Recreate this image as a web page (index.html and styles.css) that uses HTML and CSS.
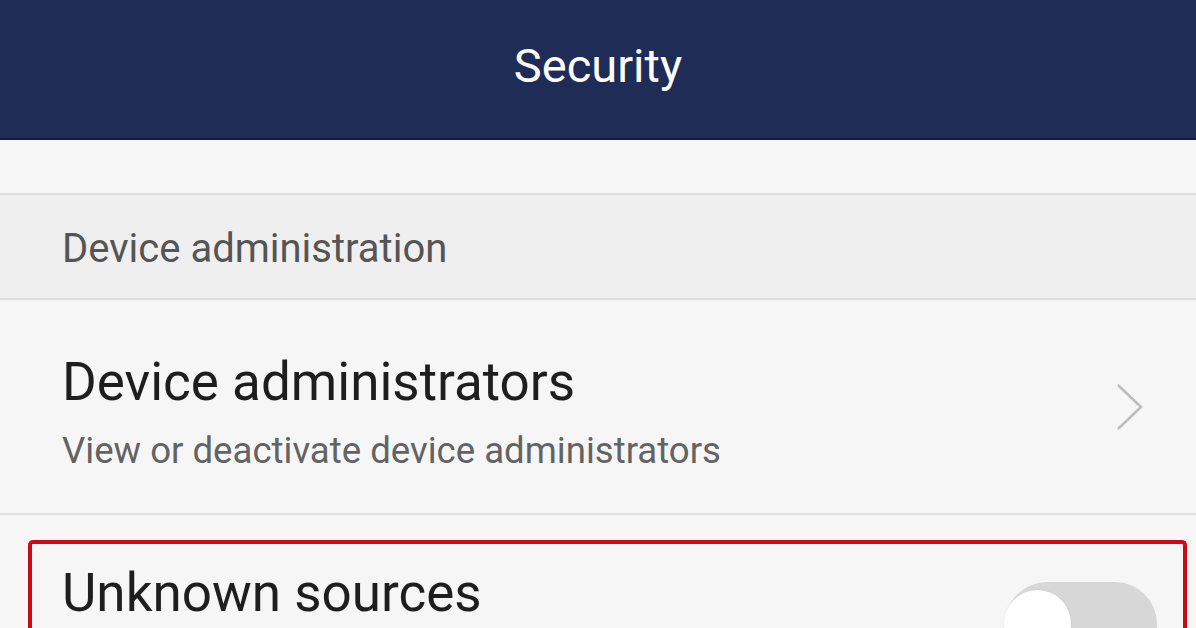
FILE: index.html
```html
<!DOCTYPE html>
<html>
<head>
<meta charset="utf-8">
<link rel="stylesheet" href="styles.css">
</head>
<body>
<div class="screen">
  <header class="topbar"><h1 class="title">Security</h1></header>
  <div class="spacer"></div>
  <div class="section-head">Device administration</div>
  <div class="item">
    <div class="item-text">
      <div class="item-title">Device administrators</div>
      <div class="item-sub">View or deactivate device administrators</div>
    </div>
    <svg class="chev" width="30" height="50" viewBox="0 0 30 50"><path d="M3 2 L26 24 L3 46" fill="none" stroke="#bdbdbd" stroke-width="2.5"/></svg>
  </div>
  <div class="gap"></div>
  <div class="highlight">
    <div class="item2">
      <div class="item-title u-title">Unknown sources</div>
      <div class="toggle"><div class="knob"></div></div>
    </div>
  </div>
</div>
</body>
</html>
```
FILE: styles.css
```css
html, body { margin: 0; padding: 0; }
body { width: 1196px; height: 628px; overflow: hidden; background: #f6f6f6; font-family: Roboto, "Noto Sans", sans-serif; }
.screen { display: flex; flex-direction: column; }
.topbar { height: 138px; box-sizing: content-box; background: #1f2c56; border-bottom: 2px solid #141d42; text-align: center; }
.title { margin: 0; padding-top: 38px; color: #fff; font-weight: 400; font-size: 47px; line-height: 56px; }
.spacer { height: 53px; background: #f6f6f6; border-bottom: 2px solid #dedede; }
.section-head { height: 105px; box-sizing: border-box; background: #efefef; border-bottom: 2px solid #dedede; padding: 30px 0 0 62px; font-size: 40px; line-height: 48px; color: #555; }
.item { height: 215px; box-sizing: border-box; background: #f6f6f6; border-bottom: 2px solid #e0e0e0; display: flex; align-items: flex-start; padding: 52px 51px 0 62px; justify-content: space-between; }
.item-text { display: flex; flex-direction: column; gap: 17px; }
.item-title { font-size: 53px; line-height: 60px; color: #1e1e1e; }
.item-sub { font-size: 36.6px; line-height: 44px; color: #636363; }
.chev { margin-top: 31px; }
.gap { height: 25px; }
.highlight { margin: 0 9px 0 28px; border: 4px solid #cf0a17; border-bottom: none; border-radius: 5px 5px 0 0; height: 120px; }
.item2 { display: flex; justify-content: space-between; align-items: flex-start; padding: 0 26px 0 30px; }
.u-title { margin-top: 19px; }
.toggle { width: 152px; height: 84px; border-radius: 42px; background: #d7d7d7; margin-top: 38px; position: relative; }
.knob { position: absolute; left: -1px; top: 8px; width: 67px; height: 67px; border-radius: 50%; background: #fff; box-shadow: 0 0 2px rgba(0,0,0,0.08); }
```
